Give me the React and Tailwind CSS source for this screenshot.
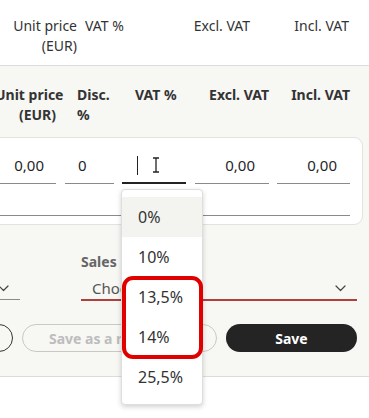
import React from 'react';

const options = ['0%', '10%', '13,5%', '14%', '25,5%'];

const Chevron = ({ className }) => (
  <svg className={className} width="11" height="7" viewBox="0 0 11 7" fill="none">
    <path d="M1 1l4.5 4.5L10 1" stroke="#444" strokeWidth="1.2" strokeLinecap="round" strokeLinejoin="round" />
  </svg>
);

const IBeam = () => (
  <svg width="8" height="16" viewBox="0 0 8 16" fill="none" className="ml-[14px]">
    <path d="M1 1h6M1 15h6M4 1v14" stroke="#222" strokeWidth="1.3" />
  </svg>
);

export default function App() {
  return (
    <div
      className="relative w-[369px] h-[418px] overflow-hidden bg-white text-[#333]"
      style={{ fontFamily: '"Noto Sans", "Open Sans", sans-serif' }}
    >
      {/* outer table header */}
      <div className="h-[66px] border-b border-[#dcdcdc] flex text-[14px] leading-[20px] pt-[16px]">
        <div className="w-[77px] text-right">
          Unit price
          <br />
          (EUR)
        </div>
        <div className="ml-[8px] w-[60px]">VAT %</div>
        <div className="w-[105px] text-right">Excl. VAT</div>
        <div className="w-[99px] text-right">Incl. VAT</div>
      </div>

      {/* editor panel */}
      <div className="h-[311px] bg-[#f7f7f3] border-b border-[#dcdcdc]">
        <div className="flex ml-[-5px] pt-[19px] text-[14px] leading-[20px] font-bold text-[#333]">
          <div className="w-[61px] text-right whitespace-nowrap">
            Unit price
            <br />
            (EUR)
          </div>
          <div className="ml-[9px] w-[49px] pl-[12px]">
            Disc.
            <br />%
          </div>
          <div className="ml-[8px] w-[64px] pl-[13px]">VAT %</div>
          <div className="ml-[9px] w-[74px] text-right">Excl. VAT</div>
          <div className="ml-[8px] w-[73px] text-right">Incl. VAT</div>
        </div>

        {/* row card */}
        <div className="mt-[12px] ml-[-10px] w-[373px] bg-white border border-[#e2e2de] rounded-[9px] pt-[10px] pb-[8px] pl-[4px]">
          <div className="flex text-[15px] text-[#1f1f2a]">
            <div className="w-[61px] h-[36px] border-b border-[#8a8a8a] flex items-center justify-end pr-[12px]">0,00</div>
            <div className="ml-[9px] w-[49px] h-[36px] border-b border-[#8a8a8a] flex items-center pl-[13px]">0</div>
            <div className="ml-[8px] w-[64px] h-[36px] border-b-2 border-[#222] flex items-center pl-[15px]">
              <span className="w-px h-[19px] bg-[#222]" />
              <IBeam />
            </div>
            <div className="ml-[9px] w-[74px] h-[36px] border-b border-[#8a8a8a] flex items-center justify-end pr-[14px]">0,00</div>
            <div className="ml-[8px] w-[73px] h-[36px] border-b border-[#8a8a8a] flex items-center justify-end pr-[13px]">0,00</div>
          </div>
          <div className="w-[355px] h-[32px] border-b border-[#8a8a8a]" />
        </div>

        {/* selects */}
        <div className="flex mt-[27px]">
          <div className="w-[50px] ml-[-30px] pt-[26px]">
            <div className="h-[22px] border-b border-[#8a8a8a] flex justify-end items-start pt-[7px] pr-[11px]">
              <Chevron />
            </div>
          </div>
          <div className="ml-[61px] w-[276px]">
            <div className="text-[14px] leading-[20px] font-bold text-[#666]">Sales</div>
            <div className="mt-[6px] h-[23px] border-b-2 border-[#b0403c] flex items-start justify-between pl-[11px] pr-[11px]">
              <span className="text-[15px] leading-[20px] text-[#555]">Choose</span>
              <Chevron className="mt-[7px]" />
            </div>
          </div>
        </div>

        {/* buttons */}
        <div className="flex mt-[23px] h-[28px]">
          <div className="ml-[-20px] w-[33px] h-[28px] rounded-full border border-[#333]" />
          <div className="ml-[9px] w-[195px] h-[28px] rounded-full border border-[#c8c8c4] flex items-center justify-center text-[14px] font-bold text-[#bdbdbd] whitespace-nowrap">
            Save as a new quote
          </div>
          <div className="ml-[9px] w-[131px] h-[28px] rounded-full bg-[#242424] flex items-center justify-center text-[14px] font-bold text-white">
            Save
          </div>
        </div>
      </div>

      {/* VAT dropdown */}
      <div className="absolute left-[121px] top-[189px] w-[82px] h-[216px] bg-white rounded-[4px] border border-[#dedede] shadow-[0_2px_5px_rgba(0,0,0,0.18)] py-[7px]">
        {options.map((o, i) => (
          <div
            key={o}
            className={`h-[40px] flex items-center pl-[16px] text-[16px] text-[#333] ${i === 0 ? 'bg-[#f3f3f0]' : ''}`}
          >
            {o}
          </div>
        ))}
      </div>

      {/* highlight */}
      <div className="absolute left-[122px] top-[276px] w-[81px] h-[83px] rounded-[11px] border-[4px] border-[#e00000]" />
    </div>
  );
}
